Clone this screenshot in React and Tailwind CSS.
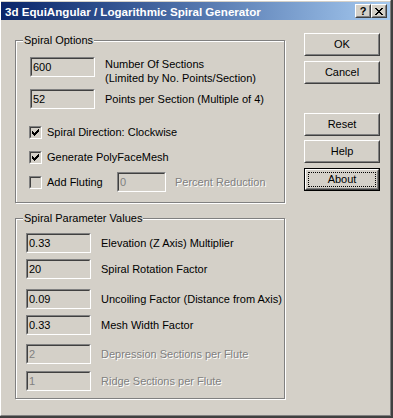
import React from "react";

// classic win9x/2000 dialog pieces
const Field = ({ value, disabled, className = "" }) => (
  <div
    className={`h-[20px] shrink-0 border border-t-[#808080] border-l-[#808080] border-r-white border-b-white ${className}`}
  >
    <div className="h-full border border-t-[#404040] border-l-[#404040] border-r-[#d4d0c8] border-b-[#d4d0c8] flex items-center pl-[1px] leading-[13px]">
      <span className={disabled ? "text-[#808080]" : "text-black"}>{value}</span>
    </div>
  </div>
);

const Check = ({ checked }) => (
  <div className="w-[13px] h-[13px] shrink-0 border border-t-[#808080] border-l-[#808080] border-r-white border-b-white">
    <div className="w-full h-full border border-t-[#404040] border-l-[#404040] border-r-[#d4d0c8] border-b-[#d4d0c8] flex items-center justify-center">
      {checked && (
        <svg width="7" height="7" viewBox="0 0 7 7" shapeRendering="crispEdges">
          <path
            fill="#000"
            d="M6 0h1v1h-1zM5 1h2v1h-2zM0 2h1v1h-1zM4 2h3v1h-3zM0 3h2v1h-2zM3 3h3v1h-3zM0 4h5v1h-5zM1 5h3v1h-3zM2 6h1v1h-1z"
          />
        </svg>
      )}
    </div>
  </div>
);

const Group = ({ title, className = "", children }) => (
  <div
    className={`relative border border-[#808080] shadow-[1px_1px_0_#fff,inset_1px_1px_0_#fff] ${className}`}
  >
    <span className="absolute left-[7px] -top-[7px] bg-[#d4d0c8] px-[1px] leading-[13px]">
      {title}
    </span>
    {children}
  </div>
);

const Button = ({ label, focused, className = "" }) =>
  focused ? (
    <div className={`w-[76px] h-[23px] border border-black ${className}`}>
      <div className="h-full border border-t-white border-l-white border-r-[#404040] border-b-[#404040]">
        <div className="h-full border border-t-[#d4d0c8] border-l-[#d4d0c8] border-r-[#808080] border-b-[#808080] p-[1px]">
          <div className="h-full border border-dotted border-black flex items-center justify-center leading-[13px]">
            {label}
          </div>
        </div>
      </div>
    </div>
  ) : (
    <div
      className={`w-[76px] h-[23px] border border-t-white border-l-white border-r-[#404040] border-b-[#404040] ${className}`}
    >
      <div className="h-full border border-t-[#d4d0c8] border-l-[#d4d0c8] border-r-[#808080] border-b-[#808080] flex items-center justify-center leading-[13px]">
        {label}
      </div>
    </div>
  );

const Dim = ({ children, className = "" }) => (
  <span className={`text-[#808080] [text-shadow:1px_1px_0_#fff] ${className}`}>{children}</span>
);

export default function App() {
  const params = [
    { v: "0.33", label: "Elevation (Z Axis) Multiplier", mt: "mt-[14px]" },
    { v: "20", label: "Spiral Rotation Factor", mt: "mt-[6px]" },
    { v: "0.09", label: "Uncoiling Factor (Distance from Axis)", mt: "mt-[10px]" },
    { v: "0.33", label: "Mesh Width Factor", mt: "mt-[6px]" },
    { v: "2", label: "Depression Sections per Flute", mt: "mt-[9px]", off: true },
    { v: "1", label: "Ridge Sections per Flute", mt: "mt-[7px]", off: true },
  ];

  return (
    <div className="w-[393px] h-[418px] bg-[#d4d0c8] border-r-2 border-b-2 border-[#404040] font-['Liberation_Sans',Arial,sans-serif] text-[11px] text-black overflow-hidden">
      <div className="h-full border border-t-white border-l-white border-r-[#808080] border-b-[#808080] pt-px">
        {/* title bar */}
        <div className="h-[18px] bg-linear-to-r from-[#0a246a] to-[#a6caf0] flex items-center pl-[4px] pr-[3px]">
          <span className="text-white font-bold text-[11.6px] leading-[13px] whitespace-nowrap">
            3d EquiAngular / Logarithmic Spiral Generator
          </span>
          <div className="ml-auto flex">
            <div className="w-[16px] h-[14px] border border-t-white border-l-white border-r-[#404040] border-b-[#404040] bg-[#d4d0c8]">
              <div className="h-full border border-t-[#d4d0c8] border-l-[#d4d0c8] border-r-[#808080] border-b-[#808080] flex items-center justify-center font-bold text-[11px] leading-[10px]">
                ?
              </div>
            </div>
            <div className="w-[16px] h-[14px] border border-t-white border-l-white border-r-[#404040] border-b-[#404040] bg-[#d4d0c8]">
              <div className="h-full border border-t-[#d4d0c8] border-l-[#d4d0c8] border-r-[#808080] border-b-[#808080] flex items-center justify-center">
                <svg width="8" height="7" viewBox="0 0 8 7" shapeRendering="crispEdges">
                  <path
                    fill="#000"
                    d="M0 0h2v1h-2zM6 0h2v1h-2zM1 1h2v1h-2zM5 1h2v1h-2zM2 2h4v1h-4zM3 3h2v1h-2zM2 4h4v1h-4zM1 5h2v1h-2zM5 5h2v1h-2zM0 6h2v1h-2zM6 6h2v1h-2z"
                  />
                </svg>
              </div>
            </div>
          </div>
        </div>

        {/* body */}
        <div className="flex pl-[14px] pt-[13px]">
          <div className="w-[270px] mt-[7px] flex flex-col">
            <Group title="Spiral Options" className="h-[163px]">
              <div className="flex items-start mt-[16px] ml-[14px]">
                <Field value="600" className="w-[65px]" />
                <div className="ml-[10px] leading-[14px]">
                  Number Of Sections
                  <br />
                  (Limited by No. Points/Section)
                </div>
              </div>
              <div className="flex items-center mt-[4px] ml-[14px]">
                <Field value="52" className="w-[65px]" />
                <span className="ml-[10px] leading-[13px]">Points per Section (Multiple of 4)</span>
              </div>
              <div className="flex items-center h-[13px] mt-[17px] ml-[13px]">
                <Check checked />
                <span className="ml-[5px] leading-[13px]">Spiral Direction: Clockwise</span>
              </div>
              <div className="flex items-center h-[13px] mt-[12px] ml-[13px]">
                <Check checked />
                <span className="ml-[5px] leading-[13px]">Generate PolyFaceMesh</span>
              </div>
              <div className="flex items-center h-[20px] mt-[8px] ml-[13px]">
                <Check />
                <span className="ml-[5px] w-[70px] leading-[13px]">Add Fluting</span>
                <Field value="0" disabled className="w-[49px]" />
                <Dim className="ml-[9px] leading-[13px]">Percent Reduction</Dim>
              </div>
            </Group>

            <Group title="Spiral Parameter Values" className="h-[181px] mt-[15px]">
              {params.map((p, i) => (
                <div key={i} className={`flex items-center ml-[10px] ${p.mt}`}>
                  <Field value={p.v} disabled={p.off} className="w-[65px]" />
                  {p.off ? (
                    <Dim className="ml-[10px] leading-[13px]">{p.label}</Dim>
                  ) : (
                    <span className="ml-[10px] leading-[13px]">{p.label}</span>
                  )}
                </div>
              ))}
            </Group>
          </div>

          <div className="ml-[19px] flex flex-col">
            <Button label="OK" />
            <Button label="Cancel" className="mt-[5px]" />
            <Button label="Reset" className="mt-[29px]" />
            <Button label="Help" className="mt-[4px]" />
            <Button label="About" focused className="mt-[5px]" />
          </div>
        </div>
      </div>
    </div>
  );
}
